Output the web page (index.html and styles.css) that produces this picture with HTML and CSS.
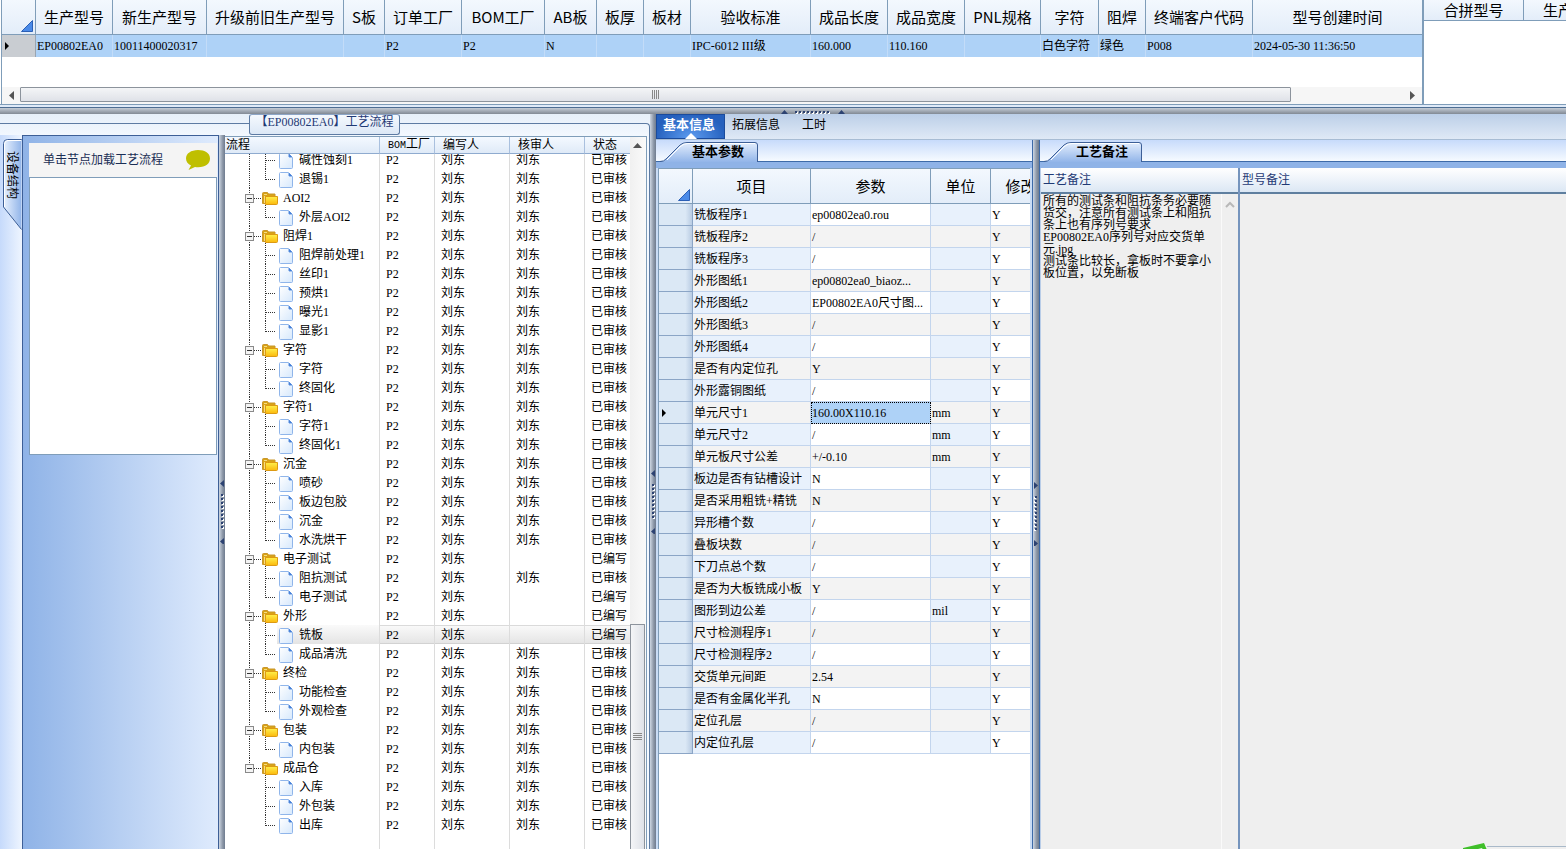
FILE: index.html
```html
<!DOCTYPE html>
<html lang="zh-CN">
<head>
    <meta charset="UTF-8">
    <meta name="viewport" content="width=device-width, initial-scale=1.0">
    <title>工艺流程</title>
    <link rel="stylesheet" href="styles.css">
</head>
<body>
    <!-- shared icons -->
    <svg class="defs" width="0" height="0">
        <defs>
            <linearGradient id="folderFill" x1="0" y1="0" x2="0" y2="1">
                <stop offset="0" stop-color="#fff04a"/>
                <stop offset="1" stop-color="#fbb80c"/>
            </linearGradient>
            <linearGradient id="docFill" x1="0" y1="0" x2="1" y2="1">
                <stop offset="0" stop-color="#ffffff"/>
                <stop offset="1" stop-color="#d6e8fc"/>
            </linearGradient>
            <linearGradient id="tabFill" x1="0" y1="0" x2="0" y2="1">
                <stop offset="0" stop-color="#e4eefd"/>
                <stop offset="1" stop-color="#92b5e9"/>
            </linearGradient>
            <linearGradient id="sideFill" x1="0" y1="0" x2="1" y2="0">
                <stop offset="0" stop-color="#e8f1fe"/>
                <stop offset="1" stop-color="#92b5e9"/>
            </linearGradient>
            <symbol id="folder" viewBox="0 0 16 14">
                <path d="M.500 12.500V2.500q0-1 1-1h4l1 1.500h6.500v9.500z" fill="#d9a316" stroke="#c9962a"/>
                <path d="M2 3.500h3M2.500 5v7" stroke="#f6dc83"/>
                <path d="M3.500 13.500V5.500h12v7q0 1-1 1z" fill="url(#folderFill)" stroke="#dd9a12"/>
            </symbol>
            <symbol id="doc" viewBox="0 0 14 16">
                <path d="M1.500 .500h8l4 4v10q0 1-1 1h-11q-1 0-1-1v-13q0-1 1-1z" fill="url(#docFill)" stroke="#8fb5ea"/>
                <path d="M10 1v3h3z" fill="#2c6fd2" stroke="#5b8fdd"/>
            </symbol>
            <symbol id="slantTab" viewBox="0 0 98 20">
                <path d="M0 20Q4 19.500 6 17L20 3Q23 .500 27 .500H95Q97.500 .500 97.500 3V20z" fill="url(#tabFill)"/>
                <path d="M0 19.500Q4 19.500 6 17L20 3Q23 .500 27 .500H95Q97.500 .500 97.500 3V20" fill="none" stroke="#3d5f97"/>
                <path d="M7 18L21 4Q24 1.500 28 1.500H95" fill="none" stroke="#fff"/>
            </symbol>
            <symbol id="grip" viewBox="0 0 6 64">
                <path d="M5 0v7L1 3.500zM5 58v7L1 61.500z" fill="#2c4272"/>
                <path d="M4 15v34" stroke="#fff" stroke-width="2" stroke-dasharray="2 2"/>
                <path d="M3 14v34" stroke="#2c4272" stroke-width="2" stroke-dasharray="2 2"/>
            </symbol>
            <symbol id="gripH" viewBox="0 0 64 6">
                <path d="M0 5h7L3.500 1zM57 5h7L60.500 1z" fill="#2c4272"/>
                <path d="M15 4h34" stroke="#fff" stroke-width="2" stroke-dasharray="2 2"/>
                <path d="M14 3h34" stroke="#2c4272" stroke-width="2" stroke-dasharray="2 2"/>
            </symbol>
            <symbol id="corner" viewBox="0 0 12 12">
                <path d="M11.500 .500v11H.500z" fill="#4a8ae8" stroke="#2b5fb5"/>
            </symbol>
        </defs>
    </svg>

    <div class="app">
        <section class="top">
            <div class="models">
                <table class="grid model-table">
                    <colgroup id="modelCols"></colgroup>
                    <thead><tr id="modelHead"></tr></thead>
                    <tbody><tr id="modelRow"></tr></tbody>
                </table>
                <div class="hscroll">
                    <svg width="18" height="16"><path d="M12 4v9L7 8.500z" fill="#555"/></svg>
                    <div class="track">
                        <div class="thumb"><svg width="8" height="9"><path d="M.500 0v9M2.500 0v9M4.500 0v9M6.500 0v9" stroke="#888"/></svg></div>
                    </div>
                    <svg width="20" height="16"><path d="M8 4v9l5-4.500z" fill="#555"/></svg>
                </div>
            </div>
            <div class="merge">
                <table class="grid merge-table">
                    <thead><tr><th>合拼型号</th><th class="cut">生产型号</th></tr></thead>
                </table>
            </div>
        </section>

        <div class="splitter-h"><svg width="64" height="6"><use href="#gripH"/></svg></div>

        <main class="bottom">
            <section class="flow">
                <div class="flow-caption"><h2>【EP00802EA0】工艺流程</h2></div>
                <div class="flow-body">
                    <aside class="side">
                        <button class="side-tab">
                            <svg width="20" height="91"><path d="M19.500 0v.500H5.500Q1.500 .500 1.500 4.500V68L19.500 90.500" fill="url(#sideFill)" stroke="#3d5f97"/><path d="M2.500 68V5Q2.500 1.500 6 1.500H19" fill="none" stroke="#fff"/></svg>
                            <span>设备结构</span>
                        </button>
                    </aside>
                    <div class="device">
                        <div class="device-head">
                            <label for="deviceList">单击节点加载工艺流程</label>
                            <svg width="26" height="22" viewBox="0 0 26 22"><path d="M13 1C6 1 1 4.500 1 9.500c0 3.200 2 5.500 5 7L3.500 21l6.500-3c9.500 1.200 15-3 15-8.500S20 1 13 1z" fill="#bfbf00"/></svg>
                        </div>
                        <textarea id="deviceList" class="device-list" readonly></textarea>
                    </div>
                    <div class="splitter"><svg width="6" height="64"><use href="#grip"/></svg></div>
                    <div class="tree">
                        <div class="tree-view">
                            <table class="tree-table tree-head">
                                <colgroup><col class="c-name"><col class="c-bom"><col class="c-man"><col class="c-man"><col></colgroup>
                                <thead><tr><th>流程</th><th><span class="mono">BOM</span>工厂</th><th>编写人</th><th>核审人</th><th>状态</th></tr></thead>
                            </table>
                            <div class="tree-rows">
                                <table class="tree-table">
                                    <colgroup><col class="c-name"><col class="c-bom"><col class="c-man"><col class="c-man"><col></colgroup>
                                    <tbody id="treeBody"></tbody>
                                </table>
                            </div>
                        </div>
                        <div class="vscroll">
                            <svg width="15" height="17"><path d="M3 11h9L7.500 6z" fill="#555"/></svg>
                            <div class="thumb"><svg width="9" height="8"><path d="M0 .500h9M0 2.500h9M0 4.500h9M0 6.500h9" stroke="#888"/></svg></div>
                        </div>
                    </div>
                </div>
            </section>

            <div class="splitter dark"><svg width="6" height="64"><use href="#grip"/></svg></div>

            <section class="detail">
                <nav class="tabs">
                    <button class="tab active">基本信息</button>
                    <button class="tab">拓展信息</button>
                    <button class="tab">工时</button>
                </nav>
                <div class="panes">
                    <div class="params">
                        <div class="subtabs">
                            <button class="subtab"><svg width="98" height="20"><use href="#slantTab"/></svg><span>基本参数</span></button>
                        </div>
                        <div class="params-view">
                            <table class="grid param-table">
                                <colgroup><col class="p-mark"><col class="p-name"><col class="p-value"><col class="p-unit"><col class="p-edit"></colgroup>
                                <thead>
                                    <tr>
                                        <th class="corner"><svg width="12" height="12"><use href="#corner"/></svg></th>
                                        <th>项目</th><th>参数</th><th>单位</th><th>修改</th>
                                    </tr>
                                </thead>
                                <tbody id="paramBody"></tbody>
                            </table>
                        </div>
                    </div>
                    <div class="splitter"><svg width="6" height="64" class="flip"><use href="#grip"/></svg></div>
                    <div class="notes">
                        <div class="subtabs">
                            <button class="subtab"><svg width="98" height="20"><use href="#slantTab"/></svg><span>工艺备注</span></button>
                        </div>
                        <div class="notes-view">
                            <div class="note">
                                <label for="flowNote">工艺备注</label>
                                <div class="note-body">
                                    <textarea id="flowNote" readonly>所有的测试条和阻抗条务必要随货交，注意所有测试条上和阻抗条上也有序列号要求
EP00802EA0序列号对应交货单元.jpg
测试条比较长，拿板时不要拿小板位置，以免断板</textarea>
                                    <div class="note-scroll"><svg width="16" height="20"><path d="M4 13l4-4 4 4" fill="none" stroke="#b8b8b8" stroke-width="2"/></svg></div>
                                </div>
                            </div>
                            <div class="note wide">
                                <label for="modelNote">型号备注</label>
                                <textarea id="modelNote" readonly></textarea>
                                <div class="popup"><svg width="24" height="7"><path d="M0 5L21 0l3 7H0z" fill="#3fbf2a"/><path d="M11 7l8-2 1 2z" fill="#e8f6e4"/></svg></div>
                            </div>
                        </div>
                    </div>
                </div>
            </section>
        </main>
    </div>

    <script>
        // title, column width (0 = rest), value
        const models = [
            ['生产型号', 77, 'EP00802EA0'],
            ['新生产型号', 94, '10011400020317'],
            ['升级前旧生产型号', 137, ''],
            ['S板', 41, ''],
            ['订单工厂', 77, 'P2'],
            ['BOM工厂', 83, 'P2'],
            ['AB板', 52, 'N'],
            ['板厚', 47, ''],
            ['板材', 47, ''],
            ['验收标准', 120, 'IPC-6012 III级'],
            ['成品长度', 77, '160.000'],
            ['成品宽度', 77, '110.160'],
            ['PNL规格', 76, ''],
            ['字符', 58, '白色字符'],
            ['阻焊', 47, '绿色'],
            ['终端客户代码', 107, 'P008'],
            ['型号创建时间', 0, '2024-05-30 11:36:50']
        ];

        // level, name, checker, status
        const flow = [
            [1, '碱性蚀刻1'], [1, '退锡1'],
            [0, 'AOI2'], [1, '外层AOI2'],
            [0, '阻焊1'], [1, '阻焊前处理1'], [1, '丝印1'], [1, '预烘1'], [1, '曝光1'], [1, '显影1'],
            [0, '字符'], [1, '字符'], [1, '终固化'],
            [0, '字符1'], [1, '字符1'], [1, '终固化1'],
            [0, '沉金'], [1, '喷砂'], [1, '板边包胶'], [1, '沉金'], [1, '水洗烘干'],
            [0, '电子测试', '', '已编写'], [1, '阻抗测试'], [1, '电子测试', '', '已编写'],
            [0, '外形', '', '已编写'], [1, '铣板', '', '已编写'], [1, '成品清洗'],
            [0, '终检'], [1, '功能检查'], [1, '外观检查'],
            [0, '包装'], [1, '内包装'],
            [0, '成品仓'], [1, '入库'], [1, '外包装'], [1, '出库']
        ];
        const selectedFlow = 25;

        // name, value, unit
        const params = [
            ['铣板程序1', 'ep00802ea0.rou'],
            ['铣板程序2', '/'],
            ['铣板程序3', '/'],
            ['外形图纸1', 'ep00802ea0_biaoz...'],
            ['外形图纸2', 'EP00802EA0尺寸图...'],
            ['外形图纸3', '/'],
            ['外形图纸4', '/'],
            ['是否有内定位孔', 'Y'],
            ['外形露铜图纸', '/'],
            ['单元尺寸1', '160.00X110.16', 'mm'],
            ['单元尺寸2', '/', 'mm'],
            ['单元板尺寸公差', '+/-0.10', 'mm'],
            ['板边是否有钻槽设计', 'N'],
            ['是否采用粗铣+精铣', 'N'],
            ['异形槽个数', '/'],
            ['叠板块数', '/'],
            ['下刀点总个数', '/'],
            ['是否为大板铣成小板', 'Y'],
            ['图形到边公差', '/', 'mil'],
            ['尺寸检测程序1', '/'],
            ['尺寸检测程序2', '/'],
            ['交货单元间距', '2.54'],
            ['是否有金属化半孔', 'N'],
            ['定位孔层', '/'],
            ['内定位孔层', '/']
        ];
        const selectedParam = 9;
        const arrow = '<svg width="6" height="8"><path d="M0 0v8l4-4z" fill="#000"/></svg>';

        function renderModels() {
            let cols = '<col class="m-mark">';
            let head = '<th class="corner"><svg width="12" height="12"><use href="#corner"/></svg></th>';
            let row = '<td class="mark">' + arrow + '</td>';
            models.forEach(([name, width, value]) => {
                cols += width ? `<col style="width:${width}px">` : '<col>';
                head += `<th>${name}</th>`;
                row += `<td>${value}</td>`;
            });
            document.getElementById('modelCols').innerHTML = cols;
            document.getElementById('modelHead').innerHTML = head;
            document.getElementById('modelRow').innerHTML = row;
        }

        // the trunk stops at the last root folder
        function treeIcon(i) {
            const level = flow[i][0];
            const lastRoot = flow.slice(i + 1).every(r => r[0] === 1);
            const lastChild = i === flow.length - 1 || flow[i + 1][0] === 0;
            if (level === 0) {
                return `<svg width="54" height="19">
                    <path d="M24.500 0v${lastRoot ? 10 : 19}M25 10.500h11M40.500 17v2" class="dots"/>
                    <rect x="20.500" y="6.500" width="8" height="8" fill="#f4f4f4" stroke="#8a8a8a"/>
                    <path d="M22 10.500h5" stroke="#333"/>
                    <use href="#folder" x="37" y="3" width="16" height="14"/></svg>`;
            }
            return `<svg width="70" height="19">
                ${lastRoot ? '' : '<path d="M24.500 0v19" class="dots"/>'}
                <path d="M40.500 0v${lastChild ? 11 : 19}M41 10.500h9" class="dots"/>
                <use href="#doc" x="54" y="3" width="14" height="16"/></svg>`;
        }

        function renderTree() {
            document.getElementById('treeBody').innerHTML = flow.map(([level, name, checker = '刘东', status = '已审核'], i) => `
                <tr class="${i === selectedFlow ? 'selected' : ''}">
                    <td><div class="node">${treeIcon(i)}<span>${name}</span></div></td>
                    <td>P2</td><td>刘东</td><td>${checker}</td><td>${status}</td>
                </tr>`).join('');
        }

        function renderParams() {
            document.getElementById('paramBody').innerHTML = params.map(([name, value, unit = ''], i) => `
                <tr>
                    <td class="mark">${i === selectedParam ? arrow : ''}</td>
                    <td class="tint">${name}</td>
                    <td class="${i === selectedParam ? 'current' : ''}">${value}</td>
                    <td class="tint">${unit}</td>
                    <td>Y</td>
                </tr>`).join('');
        }

        renderModels();
        renderTree();
        renderParams();
    </script>
</body>
</html>
```
FILE: styles.css
```css
* {
    box-sizing: border-box;
}
body {
    margin: 0;
    font-family: "Liberation Serif", "Noto Sans CJK SC", serif;
    font-size: 12px;
    line-height: 14px;
    color: #000;
    background-color: #eef4fb;
}
button, textarea {
    font: inherit;
    color: inherit;
    border: none;
    padding: 0;
    background: none;
}
textarea {
    resize: none;
    outline: none;
    overflow: hidden;
}
svg {
    display: block;
    flex: none;
}
table {
    border-collapse: separate;
    border-spacing: 0;
    table-layout: fixed;
    width: 100%;
}
.defs {
    position: absolute;
}
.mono {
    font-family: "Liberation Mono", monospace;
    font-size: 10px;
}
.app {
    display: flex;
    flex-direction: column;
    height: 100vh;
    overflow: hidden;
}

/* grids */
.grid th {
    font-family: "Noto Sans CJK SC", sans-serif;
    font-size: 15px;
    font-weight: normal;
    line-height: 20px;
    padding: 0;
    border-right: 1px solid #7f9db9;
    border-bottom: 1px solid #7f9db9;
    background: linear-gradient(#f3f8fe, #e3edf9);
    white-space: nowrap;
    overflow: hidden;
}
.grid td {
    padding: 0 1px;
    white-space: nowrap;
    overflow: hidden;
}
.grid th.corner {
    vertical-align: bottom;
    padding: 0 2px 2px 0;
}
.corner svg {
    margin-left: auto;
}

/* top */
.top {
    flex: none;
    display: grid;
    grid-template-columns: 1fr 142px;
    height: 105px;
    border-bottom: 1px solid #7f9db9;
    background-color: #fff;
}
.models {
    display: flex;
    flex-direction: column;
    justify-content: space-between;
    margin-left: 1px;
    border-left: 1px solid #7f9db9;
    border-right: 2px solid #7f9db9;
    overflow: hidden;
}
.m-mark {
    width: 34px;
}
.model-table th {
    height: 35px;
}
.model-table th:last-child, .model-table td:last-child {
    border-right: none;
}
.model-table td {
    height: 22px;
    background-color: #aed2f7;
    border-right: 1px solid #c3dcf8;
}
.model-table td.mark {
    background-color: #c9cdd2;
    border-right: 1px solid #9aa5b1;
    padding-left: 3px;
}
.hscroll {
    display: flex;
    height: 17px;
    background-color: #f6f6f6;
}
.hscroll .track {
    flex: 1;
}
.hscroll .thumb {
    display: flex;
    align-items: center;
    justify-content: center;
    width: 92%;
    height: 15px;
    border: 1px solid #8c939c;
    border-radius: 1px;
    background: linear-gradient(#f4f5f7, #dfe2e8);
}
.merge {
    overflow: hidden;
}
.merge-table {
    width: 200px;
}
.merge-table th {
    height: 21px;
}
.merge-table th.cut {
    text-align: left;
    padding-left: 19px;
}

/* splitters */
.splitter-h {
    flex: none;
    display: flex;
    height: 9px;
    padding-top: 2px;
    border-top: 2px solid #dfeaf8;
    background: linear-gradient(#4d6d92 0 1px, #c4ccd6 1px, #818994);
}
.splitter-h::before {
    content: "";
    flex: 52;
}
.splitter-h::after {
    content: "";
    flex: 48;
}
.splitter {
    flex: none;
    display: flex;
    flex-direction: column;
    width: 6px;
    background: linear-gradient(to right, #cdd6e2, #8d98a8 60%, #6f7c8f);
}
.splitter::before {
    content: "";
    flex: 53;
}
.splitter::after {
    content: "";
    flex: 47;
}
.flip {
    transform: scaleX(-1);
}

/* flow group */
.bottom {
    flex: 1;
    display: flex;
    min-height: 0;
}
.flow {
    flex: none;
    display: flex;
    flex-direction: column;
    width: 650px;
    background: linear-gradient(#e6eff9, #f4f9ff 24px);
}
.flow-caption {
    flex: none;
    display: flex;
    height: 21px;
}
.flow-caption::before, .flow-caption::after {
    content: "";
    flex: 1;
    margin-top: 9px;
    border-top: 1px solid #5d7ba3;
}
.flow-caption::after {
    border-right: 1px solid #5d7ba3;
    border-top-right-radius: 4px;
}
.flow-caption h2 {
    margin: 0;
    width: 151px;
    padding-bottom: 4px;
    font-size: 12px;
    font-weight: normal;
    line-height: 14px;
    text-align: center;
    white-space: nowrap;
    color: #1f3a75;
    border: 1px solid #5d7ba3;
    border-top-color: #8da5c6;
    border-radius: 3px;
    background: linear-gradient(#f5f9fe, #dce8f6);
}
.flow-body {
    flex: 1;
    display: flex;
    min-height: 0;
    padding-right: 2px;
    border-right: 1px solid #5d7ba3;
}
.side {
    flex: none;
    width: 22px;
    padding: 4px 0 0 2px;
    background: linear-gradient(to right, #c6dafb, #eef5ff);
}
.side-tab {
    display: grid;
}
.side-tab svg, .side-tab span {
    grid-area: 1 / 1;
}
.side-tab span {
    writing-mode: vertical-rl;
    text-orientation: sideways;
    text-align: left;
    padding: 12px 5px 0 3px;
}
.device {
    flex: none;
    display: flex;
    flex-direction: column;
    width: 197px;
    padding: 7px 1px 0 6px;
    border: 1px solid #3d5f97;
    border-bottom: none;
    background: linear-gradient(to right, #8fb3e7, #dfebfd);
}
.device-head {
    display: flex;
    align-items: center;
    justify-content: space-between;
    height: 34px;
    padding: 0 6px 0 14px;
    color: #1b2e55;
    background-color: #f4f4f4;
}
.device-list {
    height: 278px;
    border: 1px solid #7f9db9;
    background-color: #fff;
}

/* tree */
.tree {
    flex: 1;
    display: flex;
    min-width: 0;
    margin-top: 1px;
    border-top: 1px solid #7f9db9;
    border-right: 1px solid #7f9db9;
    background-color: #fff;
}
.tree-view {
    flex: 1;
    display: flex;
    flex-direction: column;
    min-width: 0;
}
.c-name {
    width: 155px;
}
.c-bom {
    width: 55px;
}
.c-man {
    width: 75px;
}
.tree-table th, .tree-table td {
    padding: 0 0 0 6px;
    border-right: 1px solid #dcdcdc;
    text-align: left;
    font-weight: normal;
    white-space: nowrap;
}
.tree-table th:last-child, .tree-table td:last-child {
    border-right: none;
}
.tree-table td:first-child {
    padding-left: 0;
}
.tree-head {
    flex: none;
}
.tree-head th {
    height: 17px;
    padding-left: 8px;
    border-right-color: #a9c0de;
    border-bottom: 1px solid #8fabcf;
    background: linear-gradient(#f4f9ff, #dfeaf7);
}
.tree-head th:first-child {
    padding-left: 1px;
}
.tree-rows {
    flex: 1;
    min-height: 0;
    overflow: hidden;
    background: linear-gradient(#dcdcdc, #dcdcdc) 154px 0 / 1px 100% no-repeat,
        linear-gradient(#dcdcdc, #dcdcdc) 209px 0 / 1px 100% no-repeat,
        linear-gradient(#dcdcdc, #dcdcdc) 284px 0 / 1px 100% no-repeat,
        linear-gradient(#dcdcdc, #dcdcdc) 359px 0 / 1px 100% no-repeat;
}
.tree-rows table {
    margin-top: -4px;
}
.tree-table td {
    height: 19px;
}
.node {
    display: flex;
    align-items: center;
    gap: 4px;
    height: 19px;
}
.dots {
    fill: none;
    stroke: #333;
    stroke-dasharray: 1 1;
}
.selected td {
    background: linear-gradient(#fafafa, #e4e4e4);
    box-shadow: inset 0 1px #dadada, inset 0 -1px #d2d2d2;
}
.selected td:first-child {
    background: linear-gradient(#fafafa, #e4e4e4) 52px 0 no-repeat;
    box-shadow: none;
}
.vscroll {
    flex: none;
    display: flex;
    flex-direction: column;
    width: 16px;
    background: linear-gradient(to right, #f0f0f0, #fafafa);
}
.vscroll::before {
    content: "";
    order: 1;
    flex: 471;
}
.vscroll .thumb {
    order: 2;
    flex: 225;
    display: flex;
    align-items: center;
    justify-content: center;
    margin-right: 1px;
    border: 1px solid #8c939c;
    border-bottom: none;
    border-radius: 1px 1px 0 0;
    background: linear-gradient(to right, #f4f5f7, #dfe2e8);
}

/* detail */
.detail {
    flex: 1;
    display: flex;
    flex-direction: column;
    min-width: 0;
}
.tabs {
    flex: none;
    display: flex;
    height: 26px;
    border-bottom: 1px solid #a7bcd4;
    background: linear-gradient(#bccfe8, #dfe9f6);
}
.tab {
    padding: 0 7px 3px;
    margin-right: 8px;
}
.tab.active {
    position: relative;
    width: 69px;
    margin-right: 0;
    padding: 0 3px 3px 0;
    font-size: 13px;
    font-weight: bold;
    color: #fff;
    border: 1px solid #1b4b9c;
    background: radial-gradient(at 50% 100%, #5d9cf0, #2560bd 75%);
}
.tab.active::after {
    content: "";
    position: absolute;
    left: 50%;
    bottom: -1px;
    margin-left: -6px;
    border: 6px solid transparent;
    border-top: none;
    border-bottom-color: #fff;
}
.panes {
    flex: 1;
    display: flex;
    min-height: 0;
}
.params {
    flex: none;
    display: flex;
    flex-direction: column;
    width: 377px;
    border-right: 1px solid #3d6aa8;
    background-color: #c9dcf5;
}
.subtabs {
    flex: none;
    display: flex;
    align-items: flex-end;
    height: 28px;
    padding-left: 4px;
    border-bottom: 6px solid #8fb3e7;
    background: linear-gradient(#c7dbfb, #f6faff 21px, #3d6aa8 21px);
}
.subtab {
    display: grid;
    align-items: center;
}
.subtab svg, .subtab span {
    grid-area: 1 / 1;
}
.subtab span {
    padding-left: 18px;
    font-size: 13px;
    font-weight: bold;
}
.params-view {
    flex: 1;
    min-height: 0;
    margin: 0 2px;
    border-left: 1px solid #7f9db9;
    border-top: 1px solid #7f9db9;
    background-color: #fff;
    overflow: hidden;
}
.param-table {
    width: 392px;
}
.p-mark {
    width: 34px;
}
.p-name {
    width: 118px;
}
.p-value {
    width: 120px;
}
.p-unit {
    width: 60px;
}
.p-edit {
    width: 60px;
}
.param-table th {
    height: 35px;
}
.param-table td {
    height: 22px;
    border-right: 1px solid #c3d5ed;
    border-bottom: 1px solid #c3d5ed;
}
.param-table td.tint {
    background-color: #e8f1fc;
}
.param-table tr:nth-child(even) td {
    background-color: #f3f3f3;
}
.param-table tbody tr td.tint:nth-child(2) {
    background-color: #e8f1fc;
}
.param-table tbody tr:nth-child(even) td.tint:nth-child(2) {
    background-color: #f3f3f3;
}
.param-table tbody td.mark,
.param-table tbody tr:nth-child(even) td.mark {
    padding-left: 3px;
    border-color: #8ba5c6;
    background: linear-gradient(to right, #dbe8f5 80%, #b9cce3);
}
.param-table tbody tr:nth-child(even) td.current {
    background-color: #aed2f7;
    outline: 1px dotted #000;
    outline-offset: -1px;
}

/* notes */
.notes {
    flex: 1;
    display: flex;
    flex-direction: column;
    min-width: 0;
    border-left: 1px solid #3d6aa8;
}
.notes-view {
    flex: 1;
    display: flex;
    min-height: 0;
    border-left: 1px solid #b9cde8;
    background-color: #efefef;
}
.note {
    flex: none;
    display: flex;
    flex-direction: column;
    width: 199px;
    border-right: 2px solid #7594bd;
}
.note label {
    flex: none;
    height: 26px;
    padding: 0 2px;
    line-height: 24px;
    color: #1f3a75;
    border-bottom: 2px solid #5f7f9f;
    background: linear-gradient(#fff, #dbe7f4);
}
.note-body {
    flex: 1;
    display: flex;
}
.note textarea {
    flex: 1;
    min-width: 0;
    padding: 1px 0 0 2px;
    line-height: 12px;
}
.note-body textarea {
    padding-right: 6px;
}
.note-scroll {
    width: 17px;
    border-left: 1px solid #fafafa;
}
.note.wide {
    flex: 1;
    border-right: none;
}
.popup {
    display: flex;
    justify-content: flex-end;
    height: 6px;
}
.popup::after {
    content: "";
    width: 79px;
    margin-top: 3px;
    border-top: 1px solid #a9b9c9;
}
```
